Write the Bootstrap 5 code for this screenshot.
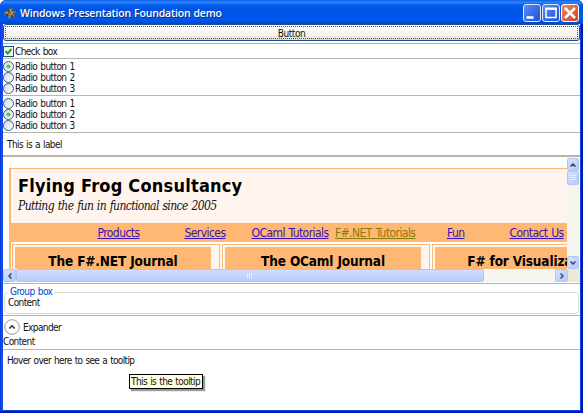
<!DOCTYPE html>
<html lang="en">
<head>
<meta charset="utf-8">
<title>Windows Presentation Foundation demo</title>
<link href="https://cdn.jsdelivr.net/npm/bootstrap@5.3.0/dist/css/bootstrap.min.css" rel="stylesheet">
<style>
body{margin:0;width:583px;height:413px;overflow:hidden;background:#fff;font:10px/11px "DejaVu Sans Condensed","DejaVu Sans",sans-serif;font-stretch:condensed;color:#111;letter-spacing:-.6px;word-spacing:.8px}
svg{display:block;flex:none}
.win{width:583px;height:413px;background:linear-gradient(90deg,#0831d9,#1655f0 2px,#0a45e0 3px);border-radius:6px 6px 0 0;padding:0 3px 3px;box-shadow:inset 0 -2px #0019b0,inset -2px 0 #0019b0}
.titlebar{height:24px;margin:0 -3px;padding:2px 4px 0 3px;border-radius:6px 6px 0 0;background:linear-gradient(#0a5be8,#2f86fb 2px,#0560ee 5px,#0054e3 9px,#0059ee 19px,#0048d0 24px);color:#fff}
.titlebtns{gap:1px}
.caption{font:600 10.5px/20px "Open Sans","Noto Sans",sans-serif;letter-spacing:-.18px;word-spacing:.5px;text-shadow:1px 1px #0a2a86;margin-left:3px;white-space:nowrap}
.body-area{width:577px;height:386px;background:#fff}
.wbtn{height:17px;border:1px solid #1f4f87;border-radius:3px;background:linear-gradient(#fff,#f2f1ec 70%,#dcd8cc);padding:1px;margin-bottom:2px}
.focusdots{border:1px dotted #555;height:13px;line-height:13px;text-align:center;letter-spacing:-.4px}
.rule{border-top:1px solid #b9b6a8}
.checkrow{height:15px;gap:1px}
.radios{height:37px;padding-top:2px}
.opt{height:11px;gap:1px;white-space:nowrap}
.labelrow{height:23px;padding:6px 0 0 4px}
.browser{height:128px;border-top:2px solid #b9b6a8}
.page{width:564px;height:112px;padding:11px 0 0 6px;overflow:hidden}
.site{width:700px;border:solid #ffb873;border-width:1px 0 0 2px;background:#fff}
.masthead{height:54px;background:#fff5ee;padding:5px 0 0 7px}
.masthead h1{font:bold 18px/24px "DejaVu Sans Condensed","DejaVu Sans",sans-serif;font-stretch:condensed;letter-spacing:.22px;word-spacing:0;margin:0;white-space:nowrap;color:#000}
.masthead p{font:italic 12px/17px "DejaVu Serif Condensed","DejaVu Serif",serif;font-stretch:condensed;letter-spacing:-.6px;margin:0;white-space:nowrap}
.menu{height:19px;background:#ffb873;display:grid;grid-template-columns:87px 67px 83.5px 112px 62.5px 80px;padding-left:86.5px;font-size:12px;line-height:20px;letter-spacing:-.57px}
.menu a{color:#3c10b4;white-space:nowrap}
.menu a.seen{color:#8a7a0c}
.cells{gap:2px;padding:2px 0 0 1px}
.cell{width:208px;height:40px;flex:none;border:1px solid #ffb873;background:#fff5ee;box-shadow:inset 1px 1px #fff;padding:2px 8px 0 2px}
.cell h2{height:30px;background:#ffb873;font:bold 13.5px/28px "DejaVu Sans Condensed","DejaVu Sans",sans-serif;font-stretch:condensed;letter-spacing:-.15px;word-spacing:0;margin:0;text-align:center;white-space:nowrap;overflow:hidden;color:#000}
.vbar{width:12px;height:112px;background:#f6f5f0;padding-top:1px}
.sb{background:linear-gradient(135deg,#d6e2fe,#b5c9fa);border:1px solid #b4c6f0;border-radius:2px;display:flex;align-items:center;justify-content:center;flex:none}
.vbar .sb{width:12px;height:13px}
.vbar .sb.thumb{height:14px}
.hbar{height:13px;background:#f6f5f0}
.hbar .sb{width:13px;height:13px}
.hbar .sb.thumb{width:468px;background:linear-gradient(#cfdcff,#b9ccfb)}
.corner{width:12px;height:13px;background:#ece9d8}
.grouprow{height:32px;padding:2px 1px 0}
.group{float:none;width:100%;height:28px;border:1px solid #dcdccf;border-radius:4px;padding:0 0 0 3px;margin:0}
.group legend{float:none;width:auto;margin:0;padding:0 2px;font-size:10px;line-height:12px;color:#0046d5;letter-spacing:-.55px}
.group div{margin-top:-1px}
.exprow{height:34px;padding-top:3px}
.exprow .head{gap:3px;padding-left:1px}
.exprow .content{margin-top:1px}
.hoverrow{padding:5px 0 0 4px;letter-spacing:-.65px}
.tip{position:absolute;left:129px;top:374px;width:74px;height:15px;border:1px solid #000;background:#ffffe1;box-shadow:2px 2px 1px #999;line-height:13px;padding-left:1px;white-space:nowrap;letter-spacing:-.58px}
</style>
<script src="https://cdn.jsdelivr.net/npm/bootstrap@5.3.0/dist/js/bootstrap.bundle.min.js"></script>
</head>
<body>
<svg width="0" height="0" class="position-absolute"><defs>
<linearGradient id="rg" x1="0" y1="0" x2="1" y2="1"><stop offset="0" stop-color="#d8d8d2"/><stop offset="1" stop-color="#fff"/></linearGradient>
<linearGradient id="bl" x1="0" y1="0" x2="1" y2="1"><stop offset="0" stop-color="#5d8df5"/><stop offset="1" stop-color="#1c4fd6"/></linearGradient>
<linearGradient id="rd" x1="0" y1="0" x2="1" y2="1"><stop offset="0" stop-color="#f08a68"/><stop offset="1" stop-color="#d0401a"/></linearGradient>
<symbol id="off" viewBox="0 0 11 11"><circle cx="5.5" cy="5.5" r="5" fill="url(#rg)" stroke="#2f6098"/></symbol>
<symbol id="on" viewBox="0 0 11 11"><circle cx="5.5" cy="5.5" r="5" fill="url(#rg)" stroke="#2f6098"/><circle cx="5.5" cy="5.5" r="2" fill="#4ec94e"/></symbol>
</defs></svg>
<div class="win">
<div class="titlebar d-flex align-items-center">
<svg width="14" height="14" viewBox="0 0 14 14"><path d="M1 6l3-.5L5 3l1.500 1L8 1.500l2 1L9 5l3-.5 1.500 2L10 8l2 3-2 .5-2-1.500-1 3-2-1 1-2.500-3 1L1 8l2-1z" fill="#7a6a44"/><path d="M2 6.500l3 .5M7 3l1 3M10 6l-2 1 3 3M6 12l1.500-4" stroke="#d8a850" fill="none"/><path d="M3 8.500l2 1M9 9l1 2M5 4.500l1.500 1" stroke="#111" fill="none"/></svg>
<span class="caption">Windows Presentation Foundation demo</span>
<div class="titlebtns d-flex ms-auto">
<svg width="18" height="18" viewBox="0 0 18 18"><rect x=".5" y=".5" width="17" height="17" rx="2.5" fill="url(#bl)" stroke="#dce8ff"/><path d="M3.500 13.500h7" stroke="#fff" stroke-width="2.500"/></svg>
<svg width="18" height="18" viewBox="0 0 18 18"><rect x=".5" y=".5" width="17" height="17" rx="2.5" fill="url(#bl)" stroke="#dce8ff"/><path d="M4 5h10v8.500H4z" fill="none" stroke="#fff" stroke-width="1.500"/><path d="M3.250 4.500h11.500" stroke="#fff" stroke-width="2"/></svg>
<svg width="18" height="18" viewBox="0 0 18 18"><rect x=".5" y=".5" width="17" height="17" rx="2.5" fill="url(#rd)" stroke="#fff"/><path d="M4 4l10 10M14 4L4 14" stroke="#fff" stroke-width="2.600"/></svg>
</div></div>
<div class="body-area">
<div class="wbtn"><div class="focusdots">Button</div></div>
<div class="rule checkrow d-flex align-items-center"><svg width="11" height="11"><rect x=".5" y=".5" width="10" height="10" fill="#f4f4ee" stroke="#1c5180"/><path d="M2.500 5l2.200 2.500L8.500 3" fill="none" stroke="#21a121" stroke-width="2"/></svg><span>Check box</span></div>
<div class="rule radios">
<div class="opt d-flex align-items-center"><svg width="11" height="11"><use href="#on"/></svg><span>Radio button 1</span></div>
<div class="opt d-flex align-items-center"><svg width="11" height="11"><use href="#off"/></svg><span>Radio button 2</span></div>
<div class="opt d-flex align-items-center"><svg width="11" height="11"><use href="#off"/></svg><span>Radio button 3</span></div></div>
<div class="rule radios">
<div class="opt d-flex align-items-center"><svg width="11" height="11"><use href="#off"/></svg><span>Radio button 1</span></div>
<div class="opt d-flex align-items-center"><svg width="11" height="11"><use href="#on"/></svg><span>Radio button 2</span></div>
<div class="opt d-flex align-items-center"><svg width="11" height="11"><use href="#off"/></svg><span>Radio button 3</span></div></div>
<div class="rule labelrow">This is a label</div>
<div class="browser">
<div class="d-flex"><div class="page"><div class="site">
<div class="masthead"><h1>Flying Frog Consultancy</h1><p>Putting the fun in functional since 2005</p></div>
<div class="menu"><a href="#">Products</a><a href="#">Services</a><a href="#">OCaml Tutorials</a><a href="#" class="seen">F#.NET Tutorials</a><a href="#">Fun</a><a href="#">Contact Us</a></div>
<div class="cells d-flex"><div class="cell"><h2>The F#.NET Journal</h2></div><div class="cell"><h2>The OCaml Journal</h2></div><div class="cell"><h2>F# for Visualization</h2></div></div>
</div></div>
<div class="vbar d-flex flex-column">
<div class="sb"><svg width="6" height="4"><path d="M.5 3.500L3 1l2.500 2.500" fill="none" stroke="#34466e" stroke-width="1.500"/></svg></div>
<div class="sb thumb"><svg width="6" height="6"><path d="M0 .5h6M0 2.500h6M0 4.500h6" stroke="#e6eeff"/></svg></div>
<div class="sb mt-auto"><svg width="6" height="4"><path d="M.5 .5L3 3 5.500 .5" fill="none" stroke="#34466e" stroke-width="1.500"/></svg></div>
</div></div>
<div class="hbar d-flex">
<div class="sb"><svg width="4" height="6"><path d="M3.500 .5L1 3l2.500 2.500" fill="none" stroke="#34466e" stroke-width="1.500"/></svg></div>
<div class="sb thumb"><svg width="6" height="6"><path d="M.5 0v6M2.500 0v6M4.500 0v6" stroke="#e6eeff"/></svg></div>
<div class="sb ms-auto"><svg width="4" height="6"><path d="M.5 .5L3 3 .5 5.500" fill="none" stroke="#34466e" stroke-width="1.500"/></svg></div>
<div class="corner"></div>
</div>
</div>
<div class="rule grouprow"><fieldset class="group"><legend>Group box</legend><div>Content</div></fieldset></div>
<div class="rule exprow">
<div class="head d-flex align-items-center"><svg width="16" height="16" viewBox="0 0 16 16"><circle cx="8" cy="8" r="7.300" fill="#fff" stroke="#999"/><path d="M5.300 9.500L8 6.800l2.700 2.700" fill="none" stroke="#333" stroke-width="1.600"/></svg><span>Expander</span></div>
<div class="content">Content</div></div>
<div class="rule hoverrow">Hover over here to see a tooltip</div>
</div></div>
<div class="tip">This is the tooltip</div>
</body></html>
